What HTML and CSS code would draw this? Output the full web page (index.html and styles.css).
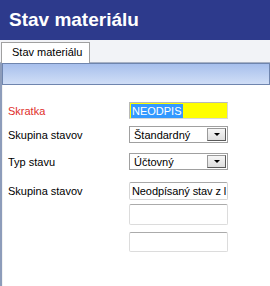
FILE: index.html
```html
<!DOCTYPE html>
<html lang="sk">
<head>
    <meta charset="UTF-8">
    <meta name="viewport" content="width=device-width, initial-scale=1.0">
    <title>Stav materiálu</title>
    <link rel="stylesheet" href="styles.css">
</head>
<body>
    <div class="titlebar">Stav materiálu</div>
    <div class="tabstrip">
        <div class="tab">Stav materiálu</div>
    </div>
    <div class="panel">
        <div class="toolbar"></div>
        <form class="form">
            <div class="row row-first">
                <label class="label required">Skratka</label>
                <div class="field field-yellow"><span class="selected">NEODPIS</span></div>
            </div>
            <div class="row row-select">
                <label class="label">Skupina stavov</label>
                <div class="field field-select">
                    <span class="value">Štandardný</span>
                    <span class="drop"></span>
                </div>
            </div>
            <div class="row row-select2">
                <label class="label">Typ stavu</label>
                <div class="field field-select">
                    <span class="value">Účtovný</span>
                    <span class="drop"></span>
                </div>
            </div>
            <div class="row row-text">
                <label class="label">Skupina stavov</label>
                <div class="field field-text"><span class="value-tight">Neodpísaný stav z l</span></div>
            </div>
            <div class="row row-empty1">
                <span class="label"></span>
                <div class="field field-empty"></div>
            </div>
            <div class="row row-empty2">
                <span class="label"></span>
                <div class="field field-empty field-tall"></div>
            </div>
        </form>
    </div>
</body>
</html>
```

FILE: styles.css
```css
body {
    margin: 0;
    width: 270px;
    height: 286px;
    overflow: hidden;
    font-family: "Liberation Sans", Arial, sans-serif;
    background: #ffffff;
}

.titlebar {
    height: 40px;
    line-height: 40px;
    padding-left: 9px;
    background: #2d3a8c;
    color: #ffffff;
    font-size: 19px;
    font-weight: bold;
}

.tabstrip {
    height: 23px;
    background: #f2f3f7;
    border-bottom: 1px solid #a9b2c4;
    box-sizing: border-box;
    display: flex;
    align-items: flex-end;
}

.tab {
    width: 89px;
    height: 21px;
    box-sizing: border-box;
    margin-left: 1px;
    margin-bottom: -1px;
    padding-left: 10px;
    line-height: 19px;
    font-size: 11px;
    color: #000000;
    background: #ffffff;
    border: 1px solid #a0a0a0;
    border-bottom: none;
}

.panel {
    height: 223px;
    border-left: 2px solid #8d9cba;
    box-shadow: inset 12px 0 0 -11px #f2f2f2;
}

.toolbar {
    height: 22px;
    box-sizing: border-box;
    border: 1px solid #6f85ae;
    background: linear-gradient(to bottom, #a7bfec, #d0def6);
}

.form {
    display: flex;
    flex-direction: column;
    padding-top: 17px;
}

.row {
    display: flex;
    align-items: center;
}

.row-select { margin-top: 7px; }
.row-select2 { margin-top: 10px; }
.row-text { margin-top: 12px; }
.row-empty1 { margin-top: 4px; }
.row-empty2 { margin-top: 7px; }

.label {
    width: 121px;
    padding-left: 6px;
    font-size: 11px;
    color: #000000;
}

.required {
    color: #e0302c;
}

.field {
    width: 99px;
    height: 17px;
    box-sizing: border-box;
    border: 1px solid #a5a5a5;
    background: #ffffff;
    font-size: 11px;
    display: flex;
    align-items: center;
}

.field-yellow {
    background: #ffff00;
    border-color: #b8b8b8 #d8d8d8 #d8d8d8 #b8b8b8;
    padding-left: 1px;
}

.selected {
    background: #3399ff;
    color: #ffffff;
    padding: 0 1px;
    line-height: 14px;
}

.field-select {
    border-color: #a0a0a0;
    justify-content: space-between;
    padding-left: 4px;
    padding-right: 1px;
}

.drop {
    width: 19px;
    height: 13px;
    box-sizing: border-box;
    border: 1px solid #9a9a9a;
    border-right-color: #5a5a5a;
    border-bottom-color: #5a5a5a;
    background: linear-gradient(to bottom, #f6f6f6, #dedede);
    position: relative;
}

.drop::after {
    content: "";
    position: absolute;
    left: 6px;
    top: 4px;
    border-left: 3px solid transparent;
    border-right: 3px solid transparent;
    border-top: 3px solid #000000;
}

.field-text {
    height: 18px;
    border-color: #d6d6d6;
    border-top-color: #a8a8a8;
    border-radius: 2px;
    padding-left: 2px;
    overflow: hidden;
    white-space: nowrap;
}

.value-tight {
    letter-spacing: -0.1px;
}

.field-empty {
    height: 21px;
    border-color: #dcdcdc;
    border-top-color: #ababab;
    border-radius: 2px;
}

.field-tall {
    height: 20px;
}
```
